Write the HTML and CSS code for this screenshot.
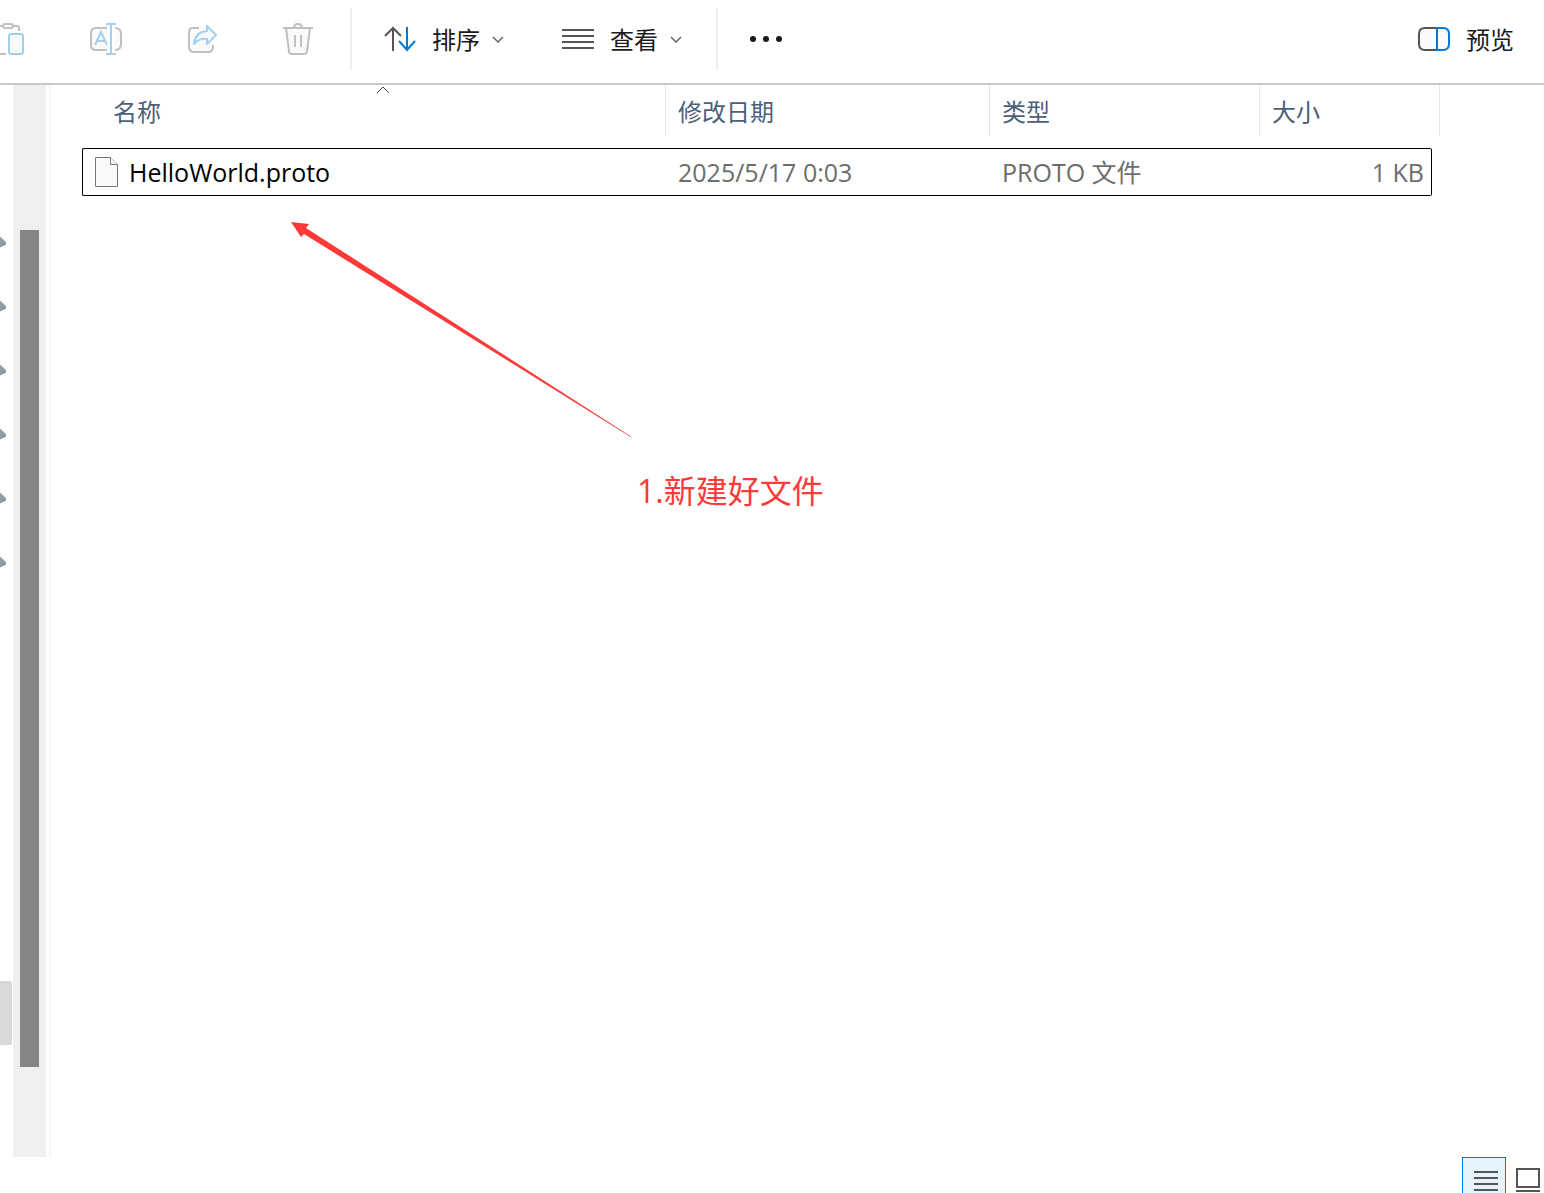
FILE: index.html
```
<!DOCTYPE html>
<html lang="zh-CN">

<head>
    <meta charset="UTF-8">
    <meta name="viewport" content="width=device-width, initial-scale=1.0">
    <title>文件资源管理器</title>
    <link rel="stylesheet" href="styles.css">
</head>

<body>

    <header class="toolbar">
        <button class="tool first" aria-label="粘贴" disabled>
            <svg width="26" height="32" viewBox="0 0 26 32" fill="none" stroke-width="2">
                <path d="M0 3h2M13 3h4q2 0 2 2v3M0 31h6" stroke="#c0c0c0" />
                <rect x="3" y="1" width="10" height="4" rx="2" stroke="#c0c0c0" />
                <rect x="9" y="11" width="14" height="20" rx="2" fill="#fafafa" stroke="#a3d0f1" />
            </svg>
        </button>
        <button class="tool" aria-label="重命名" disabled>
            <svg width="32" height="32" viewBox="0 0 32 32" fill="none" stroke-width="2">
                <path d="M17 5H6Q1 5 1 10v12q0 5 5 5h11M25 5q6 0 6 6v10q0 6-6 6" fill="#fafafa" stroke="#c0c0c0" />
                <path d="M16 1h10M16 31h10M21 1v30M5 22l6-13 6 13M7 18h8" stroke="#a3d0f1" />
            </svg>
        </button>
        <button class="tool" aria-label="共享" disabled>
            <svg width="32" height="32" viewBox="0 0 32 32" fill="none" stroke-width="2" stroke-linejoin="round">
                <path d="M13 5H7Q3 5 3 9v15q0 5 5 5h14q5 0 5-5v-2" fill="#fafafa" stroke="#c0c0c0" />
                <path d="M21 3l9 9-9 9v-5q-8-1-13 5 1-12 13-13z" fill="#fafafa" stroke="#a3d0f1" />
            </svg>
        </button>
        <button class="tool" aria-label="删除" disabled>
            <svg width="32" height="32" viewBox="0 0 32 32" fill="none" stroke="#c0c0c0" stroke-width="2">
                <path d="M4 5l3 23q0 3 3 3h12q3 0 3-3l3-23" fill="#fafafa" />
                <path d="M1 5h30M12 5q0-4 4-4t4 4M13 12v12M19 12v12" />
            </svg>
        </button>
        <span class="separator"></span>
        <button class="tool labelled">
            <svg width="32" height="26" viewBox="0 0 32 26" fill="none" stroke-width="2">
                <path d="M9 25V2M1 10l8-8 8 8" stroke="#555" />
                <path d="M23 1v23M15 15l8 9 8-9" stroke="#0078d4" />
            </svg>
            <span>排序</span>
            <svg class="chevron" width="12" height="8" viewBox="0 0 12 8" fill="none" stroke="#666" stroke-width="1.500">
                <path d="M1 2l5 5 5-5" />
            </svg>
        </button>
        <button class="tool labelled">
            <svg width="32" height="22" viewBox="0 0 32 22" stroke="#555" stroke-width="2">
                <path d="M0 2h32M0 8h32M0 14h32M0 20h32" />
            </svg>
            <span>查看</span>
            <svg class="chevron" width="12" height="8" viewBox="0 0 12 8" fill="none" stroke="#666" stroke-width="1.500">
                <path d="M1 2l5 5 5-5" />
            </svg>
        </button>
        <span class="separator"></span>
        <button class="tool" aria-label="更多">
            <svg width="32" height="8" viewBox="0 0 32 8" fill="#1a1a1a">
                <circle cx="3" cy="4" r="3" />
                <circle cx="16" cy="4" r="3" />
                <circle cx="29" cy="4" r="3" />
            </svg>
        </button>
        <button class="tool preview">
            <svg width="32" height="24" viewBox="0 0 32 24" fill="#fafafa" stroke-width="2">
                <path d="M19 1H7Q1 1 1 7v10q0 6 6 6h12" stroke="#555" />
                <path d="M19 1h6q6 0 6 6v10q0 6-6 6h-6z" stroke="#0078d4" />
            </svg>
            <span>预览</span>
        </button>
    </header>

    <main class="content">
        <nav class="sidebar">
            <div class="pin"></div>
            <div class="pin"></div>
            <div class="pin"></div>
            <div class="pin"></div>
            <div class="pin"></div>
            <div class="pin"></div>
            <div class="selected"></div>
        </nav>
        <div class="scrollbar">
            <div class="thumb"></div>
        </div>

        <section class="files">
            <table>
                <colgroup>
                    <col class="col-name">
                    <col class="col-date">
                    <col class="col-type">
                    <col class="col-size">
                    <col class="col-end">
                </colgroup>
                <thead>
                    <tr>
                        <th class="name">名称
                            <svg class="sort-mark" width="14" height="9" viewBox="0 0 14 9" fill="none" stroke="#444">
                                <path d="M1 8l6-6 6 6" />
                            </svg>
                        </th>
                        <th>修改日期</th>
                        <th>类型</th>
                        <th colspan="2">大小</th>
                    </tr>
                </thead>
                <tbody>
                    <tr>
                        <td class="name">
                            <div class="file">
                                <svg width="24" height="30" viewBox="0 0 24 30" fill="#fafafa" stroke="#777">
                                    <path d="M.5 .5h15l7 7v22h-22z" />
                                    <path d="M15.500 .5v7h7" />
                                </svg>
                                <span>HelloWorld.proto</span>
                            </div>
                        </td>
                        <td>2025/5/17 0:03</td>
                        <td>PROTO 文件</td>
                        <td class="size">1 KB</td>
                    </tr>
                </tbody>
            </table>

            <svg class="arrow" width="342" height="216" viewBox="0 0 342 216" fill="#fc3a38">
                <path d="M0 0l18 2-3 4 325 208.500v.8L13 12l-3 3z" />
            </svg>
            <p class="note">1.新建好文件</p>
        </section>
    </main>

    <footer class="statusbar">
        <button class="view active" aria-label="详细信息">
            <svg width="24" height="24" viewBox="0 0 24 24" stroke="#555" stroke-width="2">
                <path d="M0 3h24M0 9h24M0 15h24M0 21h24" />
            </svg>
        </button>
        <button class="view" aria-label="大图标">
            <svg width="24" height="26" viewBox="0 0 24 26" fill="none" stroke="#555" stroke-width="2">
                <rect x="1" y="1" width="22" height="18" />
                <path d="M0 23h24" />
            </svg>
        </button>
    </footer>

</body>

</html>
```

FILE: styles.css
```
* {
    box-sizing: border-box;
}

body {
    font-family: "Open Sans", "Noto Sans CJK SC", sans-serif;
    font-size: 24px;
    line-height: 32px;
    background-color: #fff;
    display: flex;
    flex-direction: column;
    height: 100vh;
    margin: 0;
    overflow: hidden;
}

button {
    font: inherit;
    color: #1a1a1a;
    background: none;
    border: none;
    padding: 0;
}

svg {
    display: block;
    flex-shrink: 0;
}

/* toolbar */
.toolbar {
    display: flex;
    align-items: center;
    flex-shrink: 0;
    height: 85px;
    padding-bottom: 5px;
    border-bottom: 2px solid #c8c8c4;
}

.tool {
    display: flex;
    align-items: center;
    justify-content: center;
    width: 96px;
    height: 62px;
}

.tool.first {
    width: 58px;
    justify-content: flex-start;
}

.tool.labelled {
    width: 178px;
    gap: 16px;
    justify-content: flex-start;
    padding-left: 32px;
}

.tool.preview {
    width: auto;
    gap: 16px;
    margin-left: auto;
    padding-right: 30px;
}

.tool span {
    padding-top: 2px;
}

.chevron {
    margin-left: -4px;
}

.separator {
    width: 2px;
    height: 62px;
    margin-left: 4px;
    background-color: #efefef;
}

.labelled + .separator {
    margin-left: 8px;
}

/* navigation pane */
.content {
    display: flex;
    flex: 1;
    min-height: 0;
}

.sidebar {
    width: 13px;
    padding-top: 125px;
    overflow: hidden;
}

.pin {
    display: flex;
    align-items: center;
    height: 64px;
}

.pin::before {
    content: "";
    width: 6px;
    height: 11px;
    background-color: #929da4;
    clip-path: polygon(0 0, 100% 50%, 100% 75%, 0 100%);
}

.selected {
    width: 12px;
    height: 64px;
    margin-top: 387px;
    background-color: #d9d9d9;
    border-radius: 0 2px 2px 0;
}

.scrollbar {
    display: grid;
    grid-template-rows: 145fr 837fr 90fr;
    width: 33px;
    padding: 0 7px;
    background-color: #efefef;
}

.thumb {
    grid-row: 2;
    background-color: #858585;
}

/* file list */
.files {
    position: relative;
    flex: 1;
    margin-left: 3px;
    padding-left: 31px;
    border-left: 2px solid #f7f7f7;
}

table {
    table-layout: fixed;
    width: 1358px;
    border-spacing: 0;
}

.col-name {
    width: 584px;
}

.col-date {
    width: 324px;
}

.col-type {
    width: 270px;
}

.col-size {
    width: 172px;
}

.col-end {
    width: 8px;
}

th {
    position: relative;
    height: 51px;
    padding: 2px 12px 0;
    border-right: 1px solid #e5e5e5;
    color: #4c607a;
    font-weight: normal;
    text-align: left;
}

th.name {
    padding-left: 31px;
}

.sort-mark {
    position: absolute;
    top: 0;
    left: 294px;
}

tbody::before {
    content: "";
    display: block;
    height: 12px;
}

td {
    height: 48px;
    padding: 0 12px;
    border: solid #000;
    border-width: 1px 0;
    color: #6d6d6d;
    font-size: 25px;
}

td.name {
    border-left-width: 1px;
    border-radius: 2px 0 0 2px;
    color: #000;
}

td.size {
    padding-right: 7px;
    border-right-width: 1px;
    border-radius: 0 2px 2px 0;
    text-align: right;
}

.file {
    display: flex;
    align-items: center;
    gap: 10px;
}

/* annotation over the list */
.arrow {
    position: absolute;
    top: 137px;
    left: 240px;
}

.note {
    position: absolute;
    top: 386px;
    left: 586px;
    margin: 0;
    color: #fc3a38;
    font-size: 32px;
    line-height: 40px;
}

/* status bar */
.statusbar {
    display: flex;
    justify-content: flex-end;
    flex-shrink: 0;
    height: 36px;
    overflow: hidden;
}

.view {
    width: 38px;
    height: 48px;
    padding-left: 10px;
}

.view.active {
    width: 44px;
    padding-left: 11px;
    background-color: #e5f3fb;
    border: 1px solid #0078d4;
}
```
